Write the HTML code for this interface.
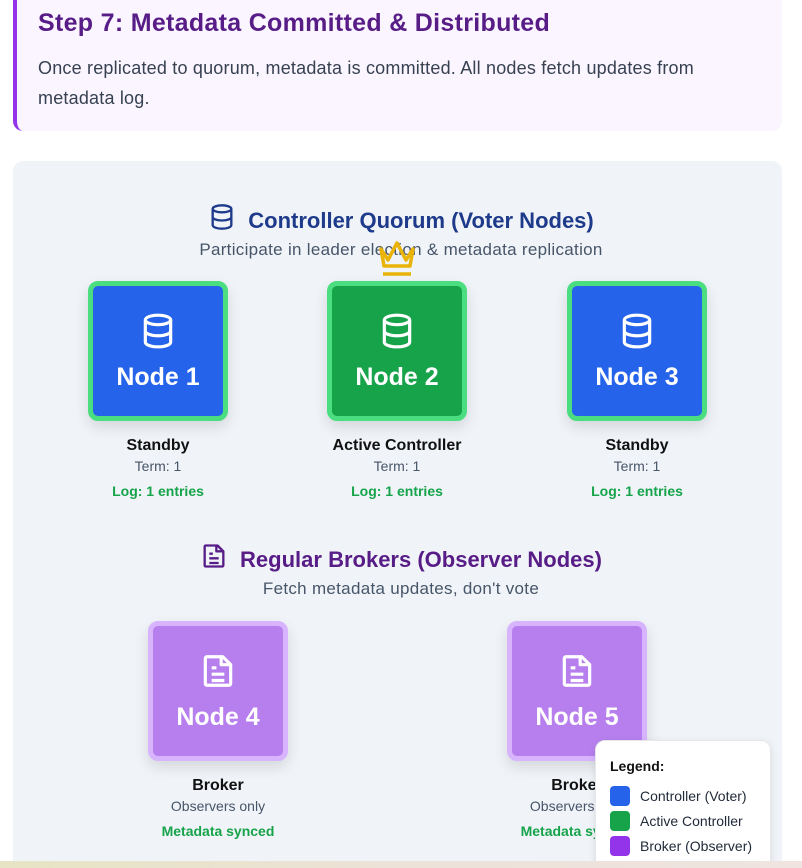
<!DOCTYPE html>
<html style="width:802px;height:868px;overflow:hidden"><head><meta charset="utf-8"><style>
*{box-sizing:border-box;margin:0;padding:0}
body{width:802px;height:868px;overflow:hidden;background:#fff;font-family:"Liberation Sans",sans-serif;position:relative}
.top{position:absolute;left:13px;top:-10px;width:769px;height:141px;background:#faf5ff;border-left:4px solid #9333ea;border-radius:10px}
.top h2{position:absolute;left:21px;top:19px;font-size:25px;color:#581c87;font-weight:bold;letter-spacing:0.3px}
.top p{position:absolute;left:21px;top:63px;width:725px;font-size:18px;line-height:30px;color:#374151;letter-spacing:0.2px}
.panel{position:absolute;left:13px;top:161px;width:769px;height:720px;background:#f0f4f8;border-radius:10px}
.strip{position:absolute;left:0;top:861px;width:802px;height:7px;background:linear-gradient(90deg,#e6e4c4,#ece2d8,#efe4e0);z-index:5}
.hd{position:absolute;left:0;width:802px;text-align:center;font-size:22px;font-weight:bold}
.hd svg{vertical-align:-4px;margin-right:12px}
.sub{position:absolute;left:0;width:802px;text-align:center;font-size:17px;color:#475569;letter-spacing:0.3px}
.node{position:absolute;width:140px;height:140px;border-radius:10px;border:5px solid #4ade80;box-shadow:0 6px 14px rgba(0,0,0,.12);color:#fff;text-align:center}
.node svg{position:absolute;left:50%;top:26px;margin-left:-19px}
.node b{position:absolute;left:0;width:100%;top:77px;font-size:25px}
.lbl{position:absolute;width:200px;text-align:center}
.lbl .a{font-size:16px;font-weight:bold;color:#111;height:21px;line-height:21px}
.lbl .b{font-size:14px;color:#475569;height:21px;line-height:21px}
.lbl .c{font-size:14px;color:#16a34a;font-weight:bold;margin-top:4px;line-height:21px}
.leg{position:absolute;left:595px;top:740px;width:176px;height:140px;background:#fff;border-radius:10px;box-shadow:0 2px 8px rgba(0,0,0,.1);border:1px solid #e5e7eb}
.leg h4{position:absolute;left:14px;top:17px;font-size:14px;color:#111}
.it{position:absolute;left:14px;font-size:14px;color:#1f2937;line-height:20px}
.it i{display:inline-block;width:20px;height:20px;border-radius:4px;vertical-align:-5px;margin-right:10px}
</style></head><body>
<div class="top"><h2>Step 7: Metadata Committed &amp; Distributed</h2><p>Once replicated to quorum, metadata is committed. All nodes fetch updates from metadata log.</p></div>
<div class="panel"></div>
<div class="strip"></div>

<div class="hd" style="top:202px;color:#1e3a8a"><svg width="28" height="30" viewBox="0 0 24 24" fill="none" stroke="#1e3a8a" stroke-width="2"><ellipse cx="12" cy="5" rx="8" ry="3"/><path d="M4 5v14c0 1.7 3.6 3 8 3s8-1.3 8-3V5M4 12c0 1.7 3.6 3 8 3s8-1.3 8-3"/></svg>Controller Quorum (Voter Nodes)</div>
<div class="sub" style="top:240px">Participate in leader election &amp; metadata replication</div>
<svg style="position:absolute;left:377px;top:239px" width="40" height="38" viewBox="0 0 40 38" fill="none" stroke="#eab308" stroke-width="3.5" stroke-linejoin="round"><path d="M4 10l7 11 9-17 9 17 7-11-3 17H7z"/><path d="M6 35h28"/></svg>

<div class="node" style="left:88px;top:281px;background:#2563eb"><svg width="38" height="38" viewBox="0 0 24 24" fill="none" stroke="#fff" stroke-width="2"><ellipse cx="12" cy="5" rx="8" ry="3"/><path d="M4 5v14c0 1.7 3.6 3 8 3s8-1.3 8-3V5M4 12c0 1.7 3.6 3 8 3s8-1.3 8-3"/></svg><b>Node 1</b></div>
<div class="node" style="left:327px;top:281px;background:#16a34a"><svg width="38" height="38" viewBox="0 0 24 24" fill="none" stroke="#fff" stroke-width="2"><ellipse cx="12" cy="5" rx="8" ry="3"/><path d="M4 5v14c0 1.7 3.6 3 8 3s8-1.3 8-3V5M4 12c0 1.7 3.6 3 8 3s8-1.3 8-3"/></svg><b>Node 2</b></div>
<div class="node" style="left:567px;top:281px;background:#2563eb"><svg width="38" height="38" viewBox="0 0 24 24" fill="none" stroke="#fff" stroke-width="2"><ellipse cx="12" cy="5" rx="8" ry="3"/><path d="M4 5v14c0 1.7 3.6 3 8 3s8-1.3 8-3V5M4 12c0 1.7 3.6 3 8 3s8-1.3 8-3"/></svg><b>Node 3</b></div>

<div class="lbl" style="left:58px;top:435px"><div class="a">Standby</div><div class="b">Term: 1</div><div class="c">Log: 1 entries</div></div>
<div class="lbl" style="left:297px;top:435px"><div class="a">Active Controller</div><div class="b">Term: 1</div><div class="c">Log: 1 entries</div></div>
<div class="lbl" style="left:537px;top:435px"><div class="a">Standby</div><div class="b">Term: 1</div><div class="c">Log: 1 entries</div></div>

<div class="hd" style="top:541px;color:#581c87"><svg width="28" height="30" viewBox="0 0 24 24" fill="none" stroke="#581c87" stroke-width="2" stroke-linejoin="round"><path d="M5 3h10l5 5v12a1 1 0 0 1-1 1H5a1 1 0 0 1-1-1V4a1 1 0 0 1 1-1z"/><path d="M14 3v5h6M8 10h3M8 14h8M8 18h8"/></svg>Regular Brokers (Observer Nodes)</div>
<div class="sub" style="top:579px">Fetch metadata updates, don't vote</div>

<div class="node" style="left:148px;top:621px;background:#b77fee;border-color:#d8b4fe"><svg width="38" height="38" viewBox="0 0 24 24" fill="none" stroke="#fff" stroke-width="2" stroke-linejoin="round"><path d="M5 3h10l5 5v12a1 1 0 0 1-1 1H5a1 1 0 0 1-1-1V4a1 1 0 0 1 1-1z"/><path d="M14 3v5h6M8 10h3M8 14h8M8 18h8"/></svg><b>Node 4</b></div>
<div class="node" style="left:507px;top:621px;background:#b77fee;border-color:#d8b4fe"><svg width="38" height="38" viewBox="0 0 24 24" fill="none" stroke="#fff" stroke-width="2" stroke-linejoin="round"><path d="M5 3h10l5 5v12a1 1 0 0 1-1 1H5a1 1 0 0 1-1-1V4a1 1 0 0 1 1-1z"/><path d="M14 3v5h6M8 10h3M8 14h8M8 18h8"/></svg><b>Node 5</b></div>

<div class="lbl" style="left:118px;top:775px"><div class="a">Broker</div><div class="b">Observers only</div><div class="c">Metadata synced</div></div>
<div class="lbl" style="left:477px;top:775px"><div class="a">Broker</div><div class="b">Observers only</div><div class="c">Metadata synced</div></div>

<div class="leg"><h4>Legend:</h4>
<div class="it" style="top:45px"><i style="background:#2563eb"></i>Controller (Voter)</div>
<div class="it" style="top:70px"><i style="background:#16a34a"></i>Active Controller</div>
<div class="it" style="top:95px"><i style="background:#9333ea"></i>Broker (Observer)</div>
</div>
</body></html>
